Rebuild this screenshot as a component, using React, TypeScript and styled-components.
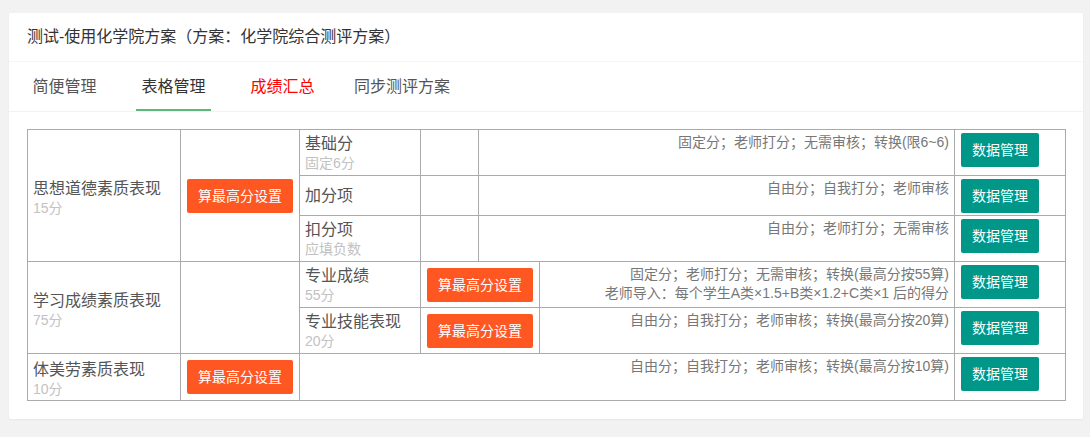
import React from "react";
import styled, { createGlobalStyle } from "styled-components";

const GlobalStyle = createGlobalStyle`
  html, body {
    margin: 0;
    padding: 0;
    background: #f2f2f2;
    font-family: "Liberation Sans", "Noto Sans CJK SC", sans-serif;
  }
  * { box-sizing: border-box; }
`;

const LINE = "#aaaaaa";

const Page = styled.div`
  min-height: 437px;
  padding: 13px 7px 19px 9px;
  background: #f2f2f2;
`;

const Card = styled.div`
  background: #fff;
  border-radius: 2px;
  box-shadow: 0 1px 2px 0 rgba(0, 0, 0, 0.05);
`;

const CardHeader = styled.div`
  height: 49px;
  line-height: 48px;
  padding: 0 18px;
  font-size: 16px;
  color: #333;
  border-bottom: 1px solid #f6f6f6;
`;

const TabBar = styled.ul`
  display: flex;
  gap: 34px;
  margin: 0;
  padding: 0 18px;
  list-style: none;
  border-bottom: 1px solid #f2f2f2;
`;

const Tab = styled.li<{ $active?: boolean; $color?: string }>`
  position: relative;
  min-width: 75px;
  height: 49px;
  line-height: 49px;
  text-align: center;
  font-size: 16px;
  color: ${(p) => p.$color ?? (p.$active ? "#333" : "#555")};
  cursor: pointer;
  &::after {
    content: "";
    display: ${(p) => (p.$active ? "block" : "none")};
    position: absolute;
    left: 0;
    right: 0;
    bottom: 0;
    height: 2px;
    background: #5fb878;
  }
`;

const CardBody = styled.div`
  padding: 17px 17px 18px 18px;
`;

const ScoreTable = styled.div`
  width: 1039px;
  border-top: 1px solid ${LINE};
  border-left: 1px solid ${LINE};
`;

const Section = styled.div`
  display: grid;
  grid-template-columns: 153px 119px 1fr;
`;

const Cell = styled.div`
  border-right: 1px solid ${LINE};
  border-bottom: 1px solid ${LINE};
`;

const CategoryCell = styled(Cell)`
  display: flex;
  flex-direction: column;
  justify-content: center;
  padding: 5px 5px 2px;
`;

const NameText = styled.div`
  font-size: 16px;
  line-height: 21px;
  color: #555;
  white-space: nowrap;
`;

const SubText = styled.div`
  font-size: 14px;
  line-height: 18px;
  color: #c2c2c2;
  white-space: nowrap;
`;

const ButtonCell = styled(Cell)`
  display: flex;
  align-items: center;
  padding: 0 6px;
`;

const SubRows = styled.div`
  display: flex;
  flex-direction: column;
`;

const columnsFor = {
  plain: "121px 58px 1fr 111px",
  withMax: "121px 119px 1fr 111px",
  direct: "1fr 111px",
} as const;

type Layout = keyof typeof columnsFor;

const SubRow = styled.div<{ $layout: Layout }>`
  flex: 1 1 auto;
  display: grid;
  grid-template-columns: ${(p) => columnsFor[p.$layout]};
`;

const ItemCell = styled(Cell)`
  display: flex;
  flex-direction: column;
  justify-content: center;
  padding: 3px 5px;
`;

const EmptyCell = styled(Cell)``;

const DescCell = styled(Cell)`
  padding: 3px 5px;
  text-align: right;
  font-size: 14px;
  line-height: 19px;
  color: #777;
`;

const ActionCell = styled(Cell)`
  padding: 3px 6px 2px;
`;

const Button = styled.button<{ $tone: "danger" | "primary" }>`
  display: inline-block;
  height: 34px;
  line-height: 34px;
  padding: 0 11px;
  border: none;
  border-radius: 2px;
  font-family: inherit;
  font-size: 14px;
  color: #fff;
  white-space: nowrap;
  cursor: pointer;
  background: ${(p) => (p.$tone === "danger" ? "#ff5722" : "#009688")};
`;

type Item = { name?: string; sub?: string; desc: string[] };
type SectionData = {
  name: string;
  score: string;
  maxBtn: boolean;
  layout: Layout;
  items: Item[];
};

const sections: SectionData[] = [
  {
    name: "思想道德素质表现",
    score: "15分",
    maxBtn: true,
    layout: "plain",
    items: [
      { name: "基础分", sub: "固定6分", desc: ["固定分；老师打分；无需审核；转换(限6~6)"] },
      { name: "加分项", desc: ["自由分；自我打分；老师审核"] },
      { name: "扣分项", sub: "应填负数", desc: ["自由分；老师打分；无需审核"] },
    ],
  },
  {
    name: "学习成绩素质表现",
    score: "75分",
    maxBtn: false,
    layout: "withMax",
    items: [
      {
        name: "专业成绩",
        sub: "55分",
        desc: [
          "固定分；老师打分；无需审核；转换(最高分按55算)",
          "老师导入：每个学生A类×1.5+B类×1.2+C类×1 后的得分",
        ],
      },
      { name: "专业技能表现", sub: "20分", desc: ["自由分；自我打分；老师审核；转换(最高分按20算)"] },
    ],
  },
  {
    name: "体美劳素质表现",
    score: "10分",
    maxBtn: true,
    layout: "direct",
    items: [{ desc: ["自由分；自我打分；老师审核；转换(最高分按10算)"] }],
  },
];

const tabs = [
  { label: "简便管理" },
  { label: "表格管理", active: true },
  { label: "成绩汇总", color: "#ff0000" },
  { label: "同步测评方案" },
];

export default function App() {
  return (
    <>
      <GlobalStyle />
      <Page>
        <Card>
          <CardHeader>测试-使用化学院方案（方案：化学院综合测评方案）</CardHeader>
          <TabBar>
            {tabs.map((t) => (
              <Tab key={t.label} $active={t.active} $color={t.color}>
                {t.label}
              </Tab>
            ))}
          </TabBar>
          <CardBody>
            <ScoreTable>
              {sections.map((s) => (
                <Section key={s.name}>
                  <CategoryCell>
                    <NameText>{s.name}</NameText>
                    <SubText>{s.score}</SubText>
                  </CategoryCell>
                  <ButtonCell>{s.maxBtn && <Button $tone="danger">算最高分设置</Button>}</ButtonCell>
                  <SubRows>
                    {s.items.map((it, i) => (
                      <SubRow key={i} $layout={s.layout}>
                        {s.layout !== "direct" && (
                          <ItemCell>
                            <NameText>{it.name}</NameText>
                            {it.sub && <SubText>{it.sub}</SubText>}
                          </ItemCell>
                        )}
                        {s.layout === "plain" && <EmptyCell />}
                        {s.layout === "withMax" && (
                          <ButtonCell>
                            <Button $tone="danger">算最高分设置</Button>
                          </ButtonCell>
                        )}
                        <DescCell>
                          {it.desc.map((d) => (
                            <div key={d}>{d}</div>
                          ))}
                        </DescCell>
                        <ActionCell>
                          <Button $tone="primary">数据管理</Button>
                        </ActionCell>
                      </SubRow>
                    ))}
                  </SubRows>
                </Section>
              ))}
            </ScoreTable>
          </CardBody>
        </Card>
      </Page>
    </>
  );
}
